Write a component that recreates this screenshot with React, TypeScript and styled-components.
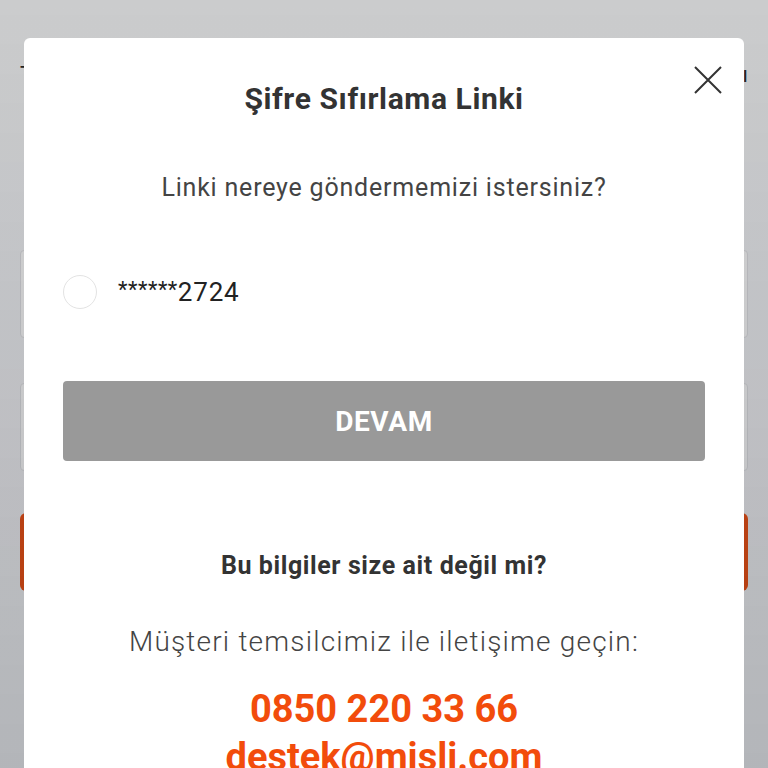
import { FC, useState } from 'react'
import styled, { createGlobalStyle } from 'styled-components'

const GlobalStyle = createGlobalStyle`
  html, body {
    margin: 0;
    padding: 0;
    height: 100%;
    overflow: hidden;
    font-family: Roboto, 'Liberation Sans', sans-serif;
    background: #fff;
  }
  * {
    box-sizing: border-box;
  }
`

const orange = '#f24c0b'

const Page = styled.div`
  height: 768px;
  padding: 62px 20px 0;
  display: flex;
  flex-direction: column;
  background: #f4f5f7;
`

const PageHeader = styled.div`
  display: flex;
  justify-content: space-between;
  font-size: 22px;
  color: #222;
  height: 40px;
`

const PageInput = styled.div`
  height: 88px;
  border: 1px solid #e2e3e6;
  border-radius: 4px;
  background: #fff;
  margin-top: ${({ $gap }: { $gap: number }) => $gap}px;
`

const PageButton = styled.div`
  height: 78px;
  margin-top: 42px;
  border-radius: 6px;
  background: ${orange};
`

const Backdrop = styled.div`
  position: fixed;
  inset: 0;
  background: linear-gradient(rgba(40, 40, 40, 0.2), rgba(30, 34, 44, 0.3));
`

const Modal = styled.div`
  position: absolute;
  top: 38px;
  left: 24px;
  width: 720px;
  height: 780px;
  background: #fff;
  border-radius: 6px;
  padding: 44px 39px 0;
  display: flex;
  flex-direction: column;
  align-items: center;
  text-align: center;
`

const CloseButton = styled.button`
  position: absolute;
  top: 26px;
  right: 20px;
  width: 32px;
  height: 32px;
  padding: 0;
  border: none;
  background: none;
  cursor: pointer;
  display: flex;
  align-items: center;
  justify-content: center;
`

const Title = styled.h2`
  margin: 0;
  font-size: 30px;
  line-height: 34px;
  font-weight: 700;
  color: #333;
  letter-spacing: 0.6px;
`

const Question = styled.p`
  margin: 57px 0 0;
  font-size: 25px;
  line-height: 30px;
  font-weight: 400;
  color: #444;
  letter-spacing: 0.8px;
`

const OptionRow = styled.label`
  align-self: stretch;
  margin-top: 72px;
  display: flex;
  align-items: center;
  gap: 21px;
  height: 34px;
  cursor: pointer;
`

const Radio = styled.span<{ $checked: boolean }>`
  width: 34px;
  height: 34px;
  border-radius: 50%;
  border: 1px solid #e3e3e3;
  background: #fff;
  display: flex;
  align-items: center;
  justify-content: center;

  &::after {
    content: '';
    width: 16px;
    height: 16px;
    border-radius: 50%;
    background: ${({ $checked }) => ($checked ? orange : 'transparent')};
  }
`

const Masked = styled.span`
  font-size: 26px;
  color: #222;
  font-weight: 400;
  letter-spacing: 0.8px;
`

const Stars = styled.span`
  font-size: 22px;
  letter-spacing: 0.5px;
  vertical-align: 4px;
`

const SubmitButton = styled.button<{ $active: boolean }>`
  align-self: stretch;
  margin-top: 72px;
  height: 80px;
  border: none;
  border-radius: 4px;
  background: ${({ $active }) => ($active ? orange : '#999')};
  color: #fff;
  font-family: inherit;
  font-size: 28px;
  font-weight: 700;
  letter-spacing: 0.6px;
`

const HelpTitle = styled.p`
  margin: 90px 0 0;
  font-size: 25px;
  line-height: 30px;
  font-weight: 700;
  color: #333;
  letter-spacing: 0.6px;
`

const HelpText = styled.p`
  margin: 44px 0 0;
  font-size: 28px;
  line-height: 34px;
  font-weight: 300;
  color: #444;
  letter-spacing: 1.2px;
`

const Contact = styled.a`
  display: block;
  font-size: 38px;
  line-height: 44px;
  font-weight: 700;
  color: ${orange};
  text-decoration: none;
  margin-top: ${({ $gap }: { $gap: number }) => $gap}px;
`

const CloseIcon: FC = () => (
  <svg width="30" height="30" viewBox="0 0 30 30">
    <path d="M2 2 L28 28 M28 2 L2 28" stroke="#333" strokeWidth="2" fill="none" />
  </svg>
)

const App: FC = () => {
  const [checked, setChecked] = useState(false)

  return (
    <>
      <GlobalStyle />
      <Page>
        <PageHeader>
          <span>Telefon</span>
          <span>ı</span>
        </PageHeader>
        <PageInput $gap={148} />
        <PageInput $gap={45} />
        <PageButton />
      </Page>
      <Backdrop>
        <Modal>
          <CloseButton aria-label="Kapat">
            <CloseIcon />
          </CloseButton>
          <Title>Şifre Sıfırlama Linki</Title>
          <Question>Linki nereye göndermemizi istersiniz?</Question>
          <OptionRow onClick={() => setChecked(!checked)}>
            <Radio $checked={checked} />
            <Masked>
              <Stars>******</Stars>2724
            </Masked>
          </OptionRow>
          <SubmitButton $active={checked}>DEVAM</SubmitButton>
          <HelpTitle>Bu bilgiler size ait değil mi?</HelpTitle>
          <HelpText>Müşteri temsilcimiz ile iletişime geçin:</HelpText>
          <Contact $gap={28} href="tel:08502203366">0850 220 33 66</Contact>
          <Contact $gap={4} href="mailto:destek@misli.com">destek@misli.com</Contact>
        </Modal>
      </Backdrop>
    </>
  )
}

export default App
